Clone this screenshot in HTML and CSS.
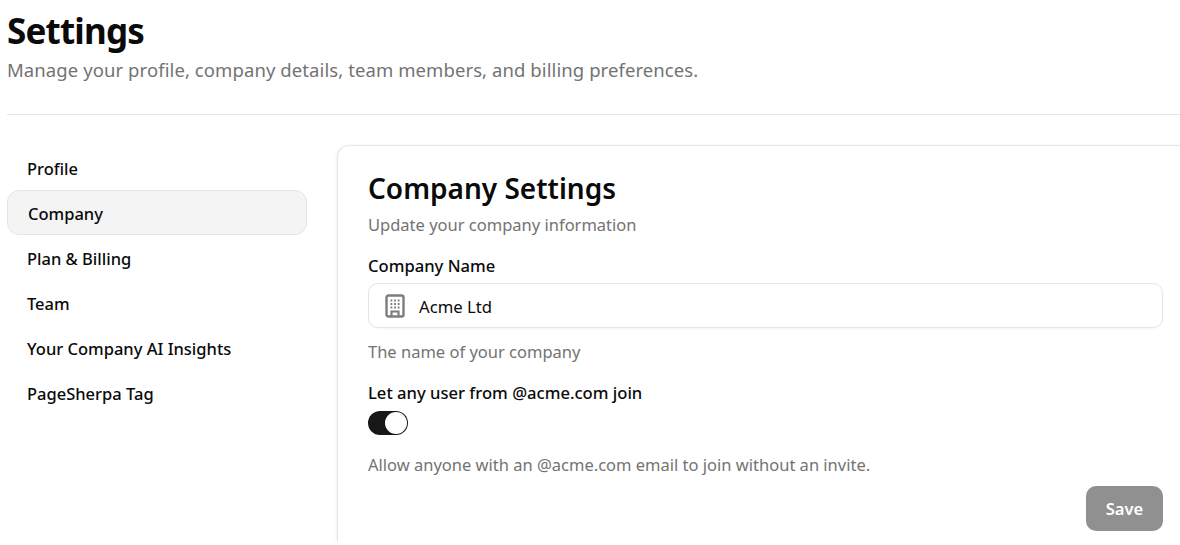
FILE: index.html
```html
<!DOCTYPE html>
<html lang="en">
<head>
<meta charset="utf-8">
<title>Settings</title>
<link rel="stylesheet" href="styles.css">
</head>
<body>
<header class="page-head">
  <h1 class="page-title">Settings</h1>
  <p class="page-sub">Manage your profile, company details, team members, and billing preferences.</p>
</header>
<div class="layout">
  <nav class="side">
    <a class="side-item">Profile</a>
    <a class="side-item active">Company</a>
    <a class="side-item">Plan &amp; Billing</a>
    <a class="side-item">Team</a>
    <a class="side-item">Your Company AI Insights</a>
    <a class="side-item">PageSherpa Tag</a>
  </nav>
  <main class="card">
    <h2 class="card-title">Company Settings</h2>
    <p class="card-sub">Update your company information</p>
    <label class="label label-name">Company Name</label>
    <div class="input">
      <svg class="icon" viewBox="0 0 20 24" width="20" height="24" fill="none" stroke="#7d7d7d" stroke-width="2.4">
        <rect x="1.5" y="1.5" width="17" height="21" rx="2"/>
        <path d="M6.5 22v-4.5h7V22" stroke-width="2.2"/>
        <path d="M5.5 6.5h1.8M9.1 6.5h1.8M12.7 6.5h1.8M5.5 10h1.8M9.1 10h1.8M12.7 10h1.8M5.5 13.5h1.8M9.1 13.5h1.8M12.7 13.5h1.8" stroke-width="1.8"/>
      </svg>
      <span class="input-text">Acme Ltd</span>
    </div>
    <p class="hint hint-name">The name of your company</p>
    <label class="label label-join">Let any user from @acme.com join</label>
    <div class="toggle"><span class="knob"></span></div>
    <p class="hint hint-join">Allow anyone with an @acme.com email to join without an invite.</p>
    <div class="actions"><button class="save">Save</button></div>
  </main>
</div>
</body>
</html>
```
FILE: styles.css
```css
* { box-sizing: border-box; }
html, body { margin: 0; height: 100%; overflow: hidden; background: #fff; }
body { font-family: "Noto Sans", "Open Sans", sans-serif; color: #0a0a0a; padding: 0 0 0 7px; }
.page-head { height: 115px; padding-top: 8px; border-bottom: 1px solid #e5e5e5; }
.page-title { margin: 0; font-size: 35px; line-height: 46px; font-weight: 700; letter-spacing: -0.8px; }
.page-sub { margin: 3px 0 0; font-size: 18.5px; line-height: 26px; color: #737373; letter-spacing: 0.085px; }
.layout { display: flex; gap: 30px; padding-top: 30px; }
.side { width: 300px; flex: none; display: flex; flex-direction: column; }
.side-item { display: flex; align-items: center; height: 45px; padding: 2px 0 0 20px; font-size: 16.5px; font-weight: 500; border-radius: 12px; }
.side-item.active { background: #f4f4f4; border: 1px solid #e5e5e5; padding-top: 1px; padding-bottom: 0; }
.card { flex: 1; height: 396px; padding: 24px 17px 0 30px; border: 1px solid #e5e5e5; border-right: 0; border-bottom: 0; border-radius: 12px 0 0 0; box-shadow: -1px 0 3px rgba(0,0,0,.05); clip-path: inset(-6px 0 0 -6px); }
.card-title { margin: 0; font-size: 28px; line-height: 36px; font-weight: 600; }
.card-sub { margin: 7px 0 0; font-size: 16.5px; line-height: 24px; color: #737373; }
.label { display: block; font-size: 16.6px; line-height: 24px; font-weight: 500; }
.label-name { margin-top: 17px; }
.input { display: flex; align-items: center; gap: 14px; height: 45px; margin-top: 5px; padding-left: 17px; border: 1px solid #e5e5e5; border-radius: 10px; box-shadow: 0 1px 2px rgba(0,0,0,.04); }
.input-text { font-size: 16.7px; padding-top: 2px; }
.icon { flex: none; margin-left: -1px; }
.hint { margin: 0; font-size: 16.5px; line-height: 24px; color: #737373; }
.hint-name { margin-top: 12px; }
.label-join { margin-top: 17px; }
.toggle { display: flex; justify-content: flex-end; align-items: center; width: 40px; height: 24px; margin-top: 6px; padding-right: 1px; background: #171717; border-radius: 12px; }
.knob { width: 22px; height: 22px; background: #fff; border-radius: 50%; }
.hint-join { margin-top: 18px; }
.actions { display: flex; justify-content: flex-end; margin-top: 9px; }
.save { width: 77px; height: 45px; border: 0; border-radius: 10px; background: #909090; color: #fff; font: 600 16.5px "Noto Sans", sans-serif; }
```
